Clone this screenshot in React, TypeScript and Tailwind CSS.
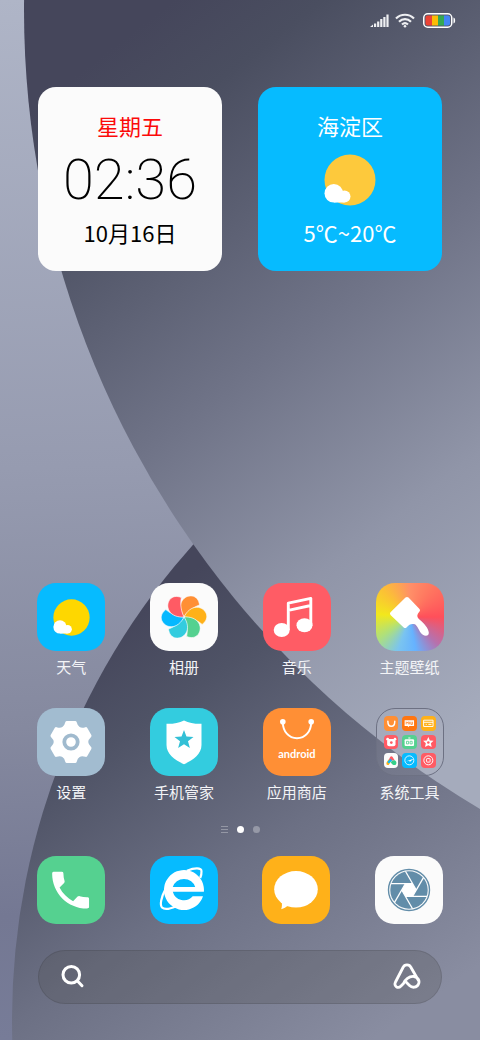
import React, { useState } from 'react';
import clsx from 'clsx';

interface AppItem {
  name: string;
  tile: string;
  icon: React.ReactNode;
}

const Wallpaper = () => (
  <svg
    className="absolute inset-0 -z-10 h-full w-full"
    viewBox="0 0 480 1040"
    preserveAspectRatio="xMidYMid slice"
    aria-hidden="true"
  >
    <defs>
      <linearGradient id="wall-left" gradientUnits="userSpaceOnUse" x1="0" y1="0" x2="40" y2="1040">
        <stop offset="0" stopColor="#afb5c7" />
        <stop offset="0.45" stopColor="#969bb0" />
        <stop offset="0.7" stopColor="#85899f" />
        <stop offset="0.88" stopColor="#747893" />
        <stop offset="1" stopColor="#777c98" />
      </linearGradient>
      <linearGradient id="wall-top" gradientUnits="userSpaceOnUse" x1="70" y1="80" x2="530" y2="680">
        <stop offset="0" stopColor="#45465b" />
        <stop offset="0.12" stopColor="#4a4e60" />
        <stop offset="0.45" stopColor="#6f7387" />
        <stop offset="0.72" stopColor="#9095a8" />
        <stop offset="1" stopColor="#a5abbc" />
      </linearGradient>
      <linearGradient id="wall-bottom" gradientUnits="userSpaceOnUse" x1="150" y1="600" x2="430" y2="1000">
        <stop offset="0" stopColor="#45465b" />
        <stop offset="0.2" stopColor="#4f5366" />
        <stop offset="0.55" stopColor="#6c7084" />
        <stop offset="1" stopColor="#898da1" />
      </linearGradient>
    </defs>
    <rect width="480" height="1040" fill="url(#wall-left)" />
    <circle cx="727" cy="1020" r="715" fill="url(#wall-bottom)" />
    <circle cx="952" cy="10" r="928" fill="url(#wall-top)" />
  </svg>
);

const StatusBar = () => (
  <header className="flex h-[87px] items-start justify-end pt-[13px] pr-6">
    <svg width="19" height="15" viewBox="0 0 19 15" fill="#eeeff2" aria-label="信号">
      <path d="M0 14l3-2.500V14zM4 10.500h2.200V14H4zM7.100 8.500h2.200V14H7.100zM10.200 6h2.200v8h-2.200zM13.300 4h2.200v10h-2.200zM16.400 1.500h2.200V14h-2.200z" />
    </svg>
    <svg className="ml-[6px]" width="20" height="15" viewBox="0 0 20 15" fill="none" stroke="#eeeff2" strokeWidth="2.200" aria-label="无线网络">
      <path d="M1 5.500C6 .5 14 .5 19 5.500M4 8.700c3.500-3.400 8.500-3.400 12 0M7 11.500c2-1.800 4-1.800 6 0" />
      <circle cx="10" cy="13.200" r="1.300" fill="#eeeff2" stroke="none" />
    </svg>
    <svg className="ml-2" width="33" height="15" viewBox="0 0 33 15" aria-label="电量">
      <rect x=".75" y=".75" width="28" height="13.500" rx="4" fill="none" stroke="#fff" strokeWidth="1.500" />
      <path d="M9 2.500H4.500a2 2 0 0 0-2 2v6a2 2 0 0 0 2 2H9z" fill="#ea4335" />
      <path d="M9 2.500h6v10H9z" fill="#fbbc05" />
      <path d="M15 2.500h6v10h-6z" fill="#34a853" />
      <path d="M21 2.500h4a2 2 0 0 1 2 2v6a2 2 0 0 1-2 2h-4z" fill="#4285f4" />
      <path d="M30.500 4.500c2.200.5 2.200 5.500 0 6z" fill="#fff" />
    </svg>
  </header>
);

const SunCloud = ({ size, sun }: { size: number; sun: string }) => (
  <svg width={size} height={size} viewBox="0 0 52 52" aria-hidden="true">
    <circle cx="26" cy="26" r="25.500" fill={sun} />
    <g fill="#fff">
      <circle cx="9.800" cy="39.300" r="9.300" />
      <circle cx="20.500" cy="42.600" r="6" />
      <path d="M10 33l8.500 5 2 4v6.600H10z" />
    </g>
  </svg>
);

const ClockWidget = () => (
  <section className="flex aspect-square flex-1 flex-col items-center rounded-[18px] bg-[#fbfbfb] pt-6 text-black">
    <p className="text-[22px] leading-7 text-[#fb0a0a]">星期五</p>
    <p className="mt-[9px] font-['Roboto'] text-[56px] leading-16 font-extralight">02:36</p>
    <p className="mt-[6px] text-[22px] leading-7">10月16日</p>
  </section>
);

const WeatherWidget = () => (
  <section className="flex aspect-square flex-1 flex-col items-center rounded-[18px] bg-[#06bbff] pt-6">
    <p className="text-[22px] leading-7">海淀区</p>
    <div className="mt-[9px] flex h-16 items-center">
      <SunCloud size={52} sun="#fdc93c" />
    </div>
    <p className="mt-[6px] text-[22px] leading-7">5℃~20℃</p>
  </section>
);

const PETALS = ['#ff8f35', '#ffb119', '#55d190', '#33ccdf', '#06b8ff', '#ff5b64'];

const PhotosIcon = () => (
  <svg className="size-full" viewBox="-34 -34 68 68" aria-hidden="true">
    {PETALS.map((fill, i) => (
      <path
        key={fill}
        d="M0 0C-3.500-5-4.800-11.500-2-16C0-19.500 4-21.500 8-21C12-20.500 15-17 15.500-12C12-10.800 5.500-8 0 0z"
        fill={fill}
        stroke="#fbfbfb"
        strokeWidth=".6"
        transform={`rotate(${i * 60})`}
      />
    ))}
  </svg>
);

const MusicIcon = () => (
  <svg className="size-full" viewBox="0 0 68 68" aria-hidden="true">
    <path d="M25.300 47V20.200L47.800 15.400V43M25.300 27.300L47.800 22.500" fill="none" stroke="#fff" strokeWidth="2.900" strokeLinejoin="round" />
    <ellipse cx="18.700" cy="47" rx="8" ry="7" fill="#fff" />
    <ellipse cx="41.500" cy="42.300" rx="8" ry="7" fill="#fff" />
  </svg>
);

const ThemeIcon = () => (
  <svg className="size-full" viewBox="0 0 68 68" aria-hidden="true">
    <path
      d="M29.500 14.500q1.500-1.200 3 0L43.500 26q1.200 1.300 0 2.600l-1.500 2c-1.500 2.500-.5 4.500 2 6.400 4 3 8.500 8.500 8.800 12.500.2 3.500-3.300 4.200-6.300 2-4-3-4.500-9.500-8.500-10.500-3-.5-5 .5-7.500 3.500q-1.500 1.200-2.800 0L14.500 32q-1.200-1.500 0-2.800z"
      fill="#fff"
    />
  </svg>
);

const polar = (radius: number, degrees: number) => {
  const a = (degrees * Math.PI) / 180;
  return `${(radius * Math.sin(a)).toFixed(2)} ${(-radius * Math.cos(a)).toFixed(2)}`;
};

const GEAR = [0, 60, 120, 180, 240, 300]
  .map((a, i) => `${i ? 'L' : 'M'}${polar(20, a - 12)}L${polar(20, a + 12)}Q${polar(12.5, a + 30)} ${polar(20, a + 48)}`)
  .join('');

const SettingsIcon = () => (
  <svg className="size-full" viewBox="-34 -34 68 68" aria-hidden="true">
    <path d={`${GEAR}z`} fill="#fff" stroke="#fff" strokeWidth="3" strokeLinejoin="round" />
    <circle r="6.700" fill="none" stroke="#a0bace" strokeWidth="3.800" />
  </svg>
);

const STAR = Array.from({ length: 10 }, (_, i) => `${i ? 'L' : 'M'}${polar(i % 2 ? 4.2 : 10, i * 36)}`).join('') + 'z';

const SecurityIcon = () => (
  <svg className="size-full" viewBox="0 0 68 68" aria-hidden="true">
    <path d="M34 12.500c5 2.500 11 3.500 17.500 3.300V37c0 9-8 15-17.500 19.200C24.500 52 16.500 46 16.500 37V15.800C23 16 29 15 34 12.500z" fill="#fff" />
    <path d={STAR} fill="#33c0d6" transform="translate(34 32)" />
  </svg>
);

const StoreIcon = () => (
  <span className="relative block size-full">
    <svg className="size-full" viewBox="0 0 68 68" aria-hidden="true">
      <path d="M19.800 14c0 9.500 6 16.300 14.200 16.300S48.200 23.500 48.200 14" fill="none" stroke="#fff" strokeWidth="1.900" />
      <circle cx="19.800" cy="13.700" r="2.800" fill="#fff" />
      <circle cx="48.200" cy="13.700" r="2.800" fill="#fff" />
    </svg>
    <span className="absolute inset-x-0 top-10 font-['Lato',sans-serif] text-[11px] leading-3 font-bold">android</span>
  </span>
);

const folderApps = [
  { tile: 'bg-[#ff8f35]', art: <path d="M3.700 5c0 6.500 6.600 6.500 6.600 0" fill="none" stroke="#fff" strokeWidth="1.400" strokeLinecap="round" /> },
  {
    tile: 'bg-[#ff7612]',
    art: (
      <>
        <path d="M2.500 4h9v5.500H7L5.800 10.800 5.500 9.500h-3z" fill="#fff" />
        <path d="M4 8V5.500l1 1 1-1V8M7.300 5.500V8M8.500 5.500V8h1.400V5.500" fill="none" stroke="#ff7612" strokeWidth=".7" />
      </>
    ),
  },
  {
    tile: 'bg-[#ffb119]',
    art: <path d="M2.500 4h9v6h-9zM2.500 6h9M4.500 8h1M7 8h3" fill="none" stroke="#fff" strokeWidth=".9" />,
  },
  {
    tile: 'bg-[#ff5b64]',
    art: (
      <>
        <circle cx="3.500" cy="4" r="1.300" fill="#fff" />
        <circle cx="10.500" cy="4" r="1.300" fill="#fff" />
        <rect x="3" y="3.800" width="8" height="7" rx="2" fill="#fff" />
        <circle cx="7" cy="7.200" r="1.300" fill="#ff5b64" />
      </>
    ),
  },
  {
    tile: 'bg-[#55d190]',
    art: (
      <>
        <rect x="2.500" y="4" width="9" height="6.500" rx="1" fill="#fff" />
        <path d="M6 2.800h2" stroke="#fff" />
        <path d="M4.300 6h2v2.500h-2zM7.700 6h2v2.500h-2z" fill="none" stroke="#55d190" strokeWidth=".8" />
      </>
    ),
  },
  {
    tile: 'bg-[#ff5b64]',
    art: (
      <>
        <path d="M7 2l1.500 3.200 3.500.4-2.600 2.300.8 3.600L7 9.800l-3.200 1.700.8-3.600L2 5.600l3.500-.4z" fill="#fff" />
        <circle cx="7" cy="7.200" r="1.200" fill="#ff5b64" />
      </>
    ),
  },
  {
    tile: 'bg-[#fbfbfb]',
    art: (
      <>
        <path d="M4.500 6.500C5.500 4.500 6 3 7 3s1.800 1.500 3.200 4L7 7.500z" fill="#ff5b64" />
        <path d="M4.300 6.300l2.700 1L4.500 11.500c-2.500 0-2.500-1.500-1.800-3z" fill="#ffb119" />
        <path d="M7 6.300l-3 3" stroke="#06bbff" strokeWidth="2.200" />
        <path d="M6.500 9c1-2.500 4.500-2.800 5.200-.5.500 1.800-.3 3-1.700 3s-2.500-1-3.500-2.500z" fill="#35cf8a" />
      </>
    ),
  },
  {
    tile: 'bg-[#06bbff]',
    art: (
      <>
        <circle cx="7" cy="7" r="4.300" fill="none" stroke="#fff" strokeWidth=".8" />
        <path d="M3.500 8L11 5.500 7.500 8.500 7 7.300z" fill="#fff" />
      </>
    ),
  },
  {
    tile: 'bg-[#ff5b64]',
    art: (
      <>
        <circle cx="7" cy="7" r="4.300" fill="none" stroke="#fff" strokeWidth=".9" />
        <rect x="5.300" y="5.300" width="3.400" height="3.400" rx=".6" fill="none" stroke="#fff" strokeWidth=".9" />
      </>
    ),
  },
];

const FolderIcon = () => (
  <span className="grid size-full grid-cols-3 place-content-center gap-1 p-[7px]">
    {folderApps.map(({ tile, art }, i) => (
      <svg key={i} className={clsx('w-full rounded-[4px]', tile)} viewBox="0 0 14 14" aria-hidden="true">
        {art}
      </svg>
    ))}
  </span>
);

const PhoneIcon = () => (
  <svg className="size-full" viewBox="0 0 68 68" aria-hidden="true">
    <path
      transform="translate(9 9.500) scale(2.050)"
      d="M6.620 10.790c1.440 2.830 3.760 5.140 6.590 6.590l2.200-2.200c.27-.27.67-.36 1.020-.24 1.120.37 2.330.57 3.570.57.55 0 1 .2 1 .7V20.300c0 .5-.45.700-1 .700-9.390 0-17-7.610-17-17 0-.55.25-1 .7-1h4.100c.5 0 .7.45.7 1 0 1.250.2 2.450.57 3.570.11.350.03.74-.25 1.020z"
      fill="#fff"
    />
  </svg>
);

const BrowserIcon = () => (
  <svg className="size-full" viewBox="0 0 68 68" aria-hidden="true">
    <path
      d="M53.900 35.700A20 20 0 1 0 53 40.200H42.700A11.500 11.500 0 0 1 22.800 35.700zM22.800 31A11.500 10.500 0 0 1 45.200 31z"
      fill="#fff"
      fillRule="evenodd"
    />
    <path
      d="M37 14.800C44.500 11.800 51.200 11.500 51.500 15c.2 2.500-.3 4.500-1.300 7M15.500 33C11 41.500 9.700 49 12 51.500c2.500 2.300 8.500 1.200 14-1.300"
      fill="none"
      stroke="#fff"
      strokeWidth="2.200"
    />
  </svg>
);

const MessageIcon = () => (
  <svg className="size-full" viewBox="0 0 68 68" aria-hidden="true">
    <ellipse cx="34" cy="33.300" rx="21.800" ry="18.300" fill="#fff" />
    <path d="M19.500 45c.8 3.500.5 6-.3 8.300 2.800-.8 4.800-2.300 7.300-3.800z" fill="#fff" />
  </svg>
);

const CameraIcon = () => (
  <svg className="size-full" viewBox="-34 -34 68 68" aria-hidden="true">
    <circle r="20.500" fill="none" stroke="#628da9" strokeWidth="1.400" />
    <circle r="18.700" fill="#628da9" />
    <path d={`M${[30, 90, 150, 210, 270, 330].map(a => polar(7.2, a)).join('L')}z`} fill="#fff" />
    {[0, 60, 120, 180, 240, 300].map(a => (
      <path key={a} d="M-18-6.300H3.600" stroke="#fff" strokeWidth="1.300" transform={`rotate(${a})`} />
    ))}
  </svg>
);

const homeApps: AppItem[] = [
  {
    name: '天气',
    tile: 'bg-[#06bbff]',
    icon: (
      <span className="flex size-full items-center justify-center">
        <SunCloud size={37} sun="#fed700" />
      </span>
    ),
  },
  { name: '相册', tile: 'bg-[#fbfbfb]', icon: <PhotosIcon /> },
  { name: '音乐', tile: 'bg-[#ff5c65]', icon: <MusicIcon /> },
  {
    name: '主题壁纸',
    tile: 'bg-[conic-gradient(#ff8f68,#ff7860_35deg,#ff4f5a_90deg,#b671ad_135deg,#66b2ff_170deg,#7ac4f0_200deg,#aee07c_235deg,#f2e81c_275deg,#fbc135_315deg,#ff8f68)]',
    icon: <ThemeIcon />,
  },
  { name: '设置', tile: 'bg-[#a2bcd0]', icon: <SettingsIcon /> },
  { name: '手机管家', tile: 'bg-[#33ccdf]', icon: <SecurityIcon /> },
  { name: '应用商店', tile: 'bg-[#ff8f35]', icon: <StoreIcon /> },
  { name: '系统工具', tile: 'border border-[#6d7183] bg-white/5', icon: <FolderIcon /> },
];

const dockApps: AppItem[] = [
  { name: '电话', tile: 'bg-[#55d190]', icon: <PhoneIcon /> },
  { name: '浏览器', tile: 'bg-[#06bbff]', icon: <BrowserIcon /> },
  { name: '短信', tile: 'bg-[#ffb119]', icon: <MessageIcon /> },
  { name: '相机', tile: 'bg-[#fbfbfb]', icon: <CameraIcon /> },
];

const AppButton = ({ app, hideLabel = false }: { app: AppItem; hideLabel?: boolean }) => (
  <button type="button" aria-label={app.name} className="flex flex-col items-center gap-[6px]">
    <span className={clsx('block size-[68px] overflow-hidden rounded-[19px]', app.tile)}>{app.icon}</span>
    {!hideLabel && <span className="text-[15px] leading-5 text-[#f3f4f7]">{app.name}</span>}
  </button>
);

export default function App() {
  const [query, setQuery] = useState('');

  return (
    <main className="relative isolate flex min-h-screen flex-col overflow-hidden pb-9 font-['Noto_Sans_CJK_SC',sans-serif] text-white">
      <Wallpaper />
      <StatusBar />

      <div className="flex gap-9 px-[38px]">
        <ClockWidget />
        <WeatherWidget />
      </div>

      <div className="min-h-10 flex-1" />

      <div className="grid grid-cols-4 gap-y-[31px] pr-[14px] pl-[15px]">
        {homeApps.map(app => (
          <AppButton key={app.name} app={app} />
        ))}
      </div>

      {/* Page indicator */}
      <div className="mt-6 flex h-[7px] items-center justify-center gap-[9px]">
        <span className="flex w-[7px] flex-col gap-[2px]">
          <span className="h-px bg-white/30" />
          <span className="h-px bg-white/30" />
          <span className="h-px bg-white/30" />
        </span>
        <span className="size-[7px] rounded-full bg-white" />
        <span className="size-[7px] rounded-full bg-white/30" />
      </div>

      <nav className="mt-[23px] grid grid-cols-4 px-[15px]" aria-label="常用应用">
        {dockApps.map(app => (
          <AppButton key={app.name} app={app} hideLabel />
        ))}
      </nav>

      <form
        role="search"
        onSubmit={e => e.preventDefault()}
        className="mx-[38px] mt-[26px] flex h-[54px] items-center rounded-full border border-black/10 bg-[#4a4a4a]/25 px-5"
      >
        <button type="submit" aria-label="搜索">
          <svg width="28" height="28" viewBox="0 0 28 28" fill="none" stroke="#fff" strokeWidth="3" strokeLinecap="round" aria-hidden="true">
            <circle cx="12.300" cy="11.700" r="8.300" />
            <path d="M18.500 18l4.500 4.700" />
          </svg>
        </button>
        <input
          type="text"
          aria-label="搜索"
          value={query}
          onChange={e => setQuery(e.target.value)}
          className="min-w-0 flex-1 bg-transparent px-3 outline-none"
        />
        <button type="button" aria-label="语音助手">
          <svg width="28" height="28" viewBox="0 0 28 28" fill="none" stroke="#fff" strokeWidth="2.800" strokeLinecap="round" strokeLinejoin="round" aria-hidden="true">
            <path d="M12.500 18.500l4 4c2.500 2.500 7.500 2.500 9-1.500 1.500-3.500-.5-7-4.500-7.500-5-.5-9 3-10.500 7L8 23c-3 3-7.500.5-5.500-4L10 4.500c1.500-3.500 6.500-3.500 8 0l7.500 13" />
          </svg>
        </button>
      </form>
    </main>
  );
}
